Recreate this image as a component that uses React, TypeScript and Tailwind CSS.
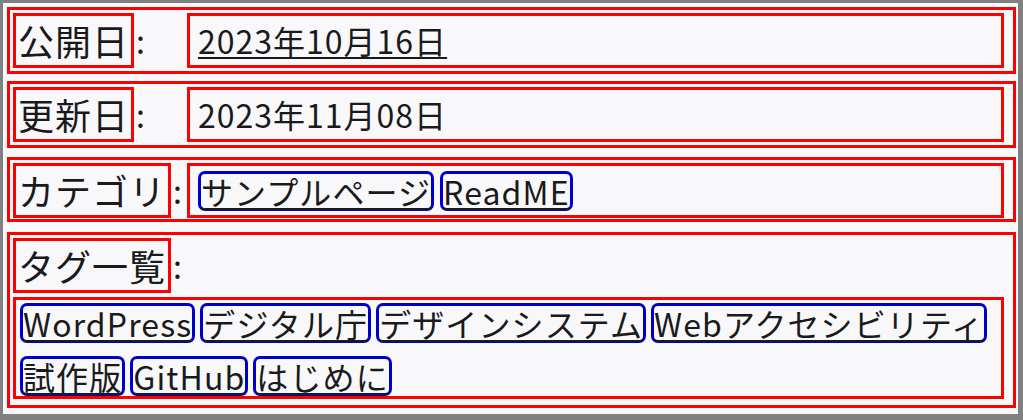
const FONT = "font-['Noto_Sans_CJK_JP','Noto_Sans',sans-serif]"

const categories = ['サンプルページ', 'ReadME']
const tags = [
  'WordPress',
  'デジタル庁',
  'デザインシステム',
  'Webアクセシビリティ',
  '試作版',
  'GitHub',
  'はじめに',
]

function Tag({ label }: { label: string }) {
  return (
    <a className="inline-block border-[3px] border-[#0000c8] rounded-[7px] leading-[34px] tracking-[1.1px] underline decoration-[1.5px] underline-offset-[3px]">
      {label}
    </a>
  )
}

function Label({ text }: { text: string }) {
  return (
    <div className="flex items-center w-[174px] shrink-0">
      <span className="border-[3px] border-[#ff0000] px-[2px] text-[36px] tracking-[1px]">{text}</span>
      <span className="pl-[2px]">:</span>
    </div>
  )
}

export default function App() {
  return (
    <div className={`w-[1023px] h-[420px] bg-[#808080] pt-[3px] pl-[3px] ${FONT}`}>
      <div className="w-[1015px] h-[411px] bg-[#f8f8fa] pl-[4px] pr-[2px] pt-[4px] text-[32px] leading-[49px] tracking-[1px] text-[#1a1a1a]">
        {/* 公開日 */}
        <div className="flex border-[3px] border-[#ff0000] pl-[3px] pr-[9px] py-[3px]">
          <Label text="公開日" />
          <div className="flex-1 border-[3px] border-[#ff0000] pl-[8px]">
            <a className="underline decoration-[1.5px] underline-offset-[3px]">2023年10月16日</a>
          </div>
        </div>

        {/* 更新日 */}
        <div className="mt-[7px] flex border-[3px] border-[#ff0000] pl-[3px] pr-[9px] py-[3px]">
          <Label text="更新日" />
          <div className="flex-1 border-[3px] border-[#ff0000] pl-[8px]">2023年11月08日</div>
        </div>

        {/* カテゴリ */}
        <div className="mt-[9px] flex border-[3px] border-[#ff0000] pl-[3px] pr-[9px] pt-[3px] pb-[1px]">
          <Label text="カテゴリ" />
          <div className="flex-1 flex items-center gap-x-[6px] border-[3px] border-[#ff0000] pl-[8px]">
            {categories.map(c => (
              <Tag key={c} label={c} />
            ))}
          </div>
        </div>

        {/* タグ一覧 */}
        <div className="mt-[10px] border-[3px] border-[#ff0000] pl-[3px] pr-[9px] pt-[3px] pb-[6px]">
          <Label text="タグ一覧" />
          <div className="mt-[4px] flex flex-wrap gap-x-[5px] gap-y-[13px] border-[3px] border-[#ff0000] pl-[4px] pt-[3px]">
            {tags.map(t => (
              <Tag key={t} label={t} />
            ))}
          </div>
        </div>
      </div>
    </div>
  )
}
